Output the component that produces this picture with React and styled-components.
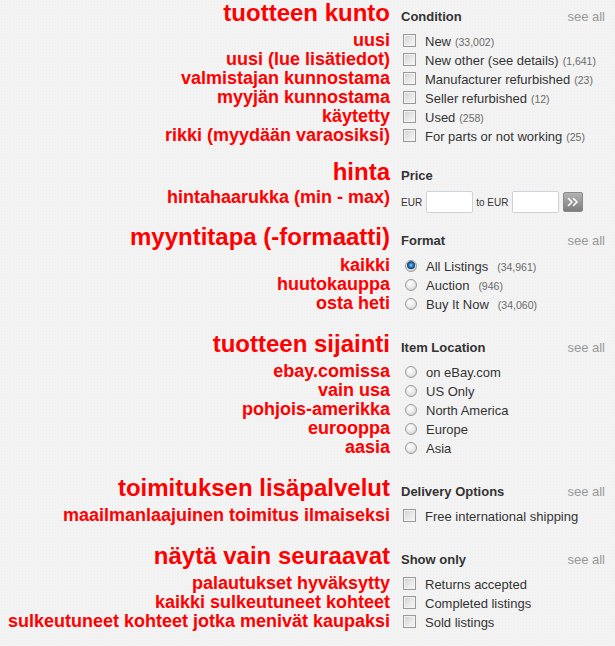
import React from "react";
import styled, { createGlobalStyle } from "styled-components";

const GlobalStyle = createGlobalStyle`
  html, body {
    margin: 0;
    padding: 0;
    background: #f3f3f3;
  }
  body {
    font-family: "Liberation Sans", Arial, Helvetica, sans-serif;
  }
  * { box-sizing: border-box; }
`;

const Page = styled.div`
  width: 615px;
  min-height: 646px;
  background-color: #f3f3f3;
  background-image: radial-gradient(rgba(0, 0, 0, 0.018) 1px, transparent 1px);
  background-size: 3px 3px;
`;

const Section = styled.section`
  margin-top: ${(p) => p.$mt}px;
`;

const Row = styled.div`
  display: grid;
  grid-template-columns: 390px 1fr;
  column-gap: 11px;
  padding-right: 10px;
  align-items: ${(p) => p.$align || "baseline"};
  height: ${(p) => p.$h}px;
`;

const RedHeading = styled.h2`
  margin: 0;
  font-size: 24px;
  font-weight: bold;
  line-height: 26px;
  color: #ff0000;
  text-align: right;
  white-space: nowrap;
`;

const RedLabel = styled.div`
  font-size: 18px;
  font-weight: bold;
  line-height: ${(p) => p.$lh || 19}px;
  color: #ff0000;
  text-align: right;
  white-space: nowrap;
`;

const Head = styled.div`
  display: flex;
  justify-content: space-between;
  align-items: baseline;
`;

const HeadTitle = styled.h3`
  margin: 0;
  font-size: 13px;
  font-weight: bold;
  line-height: 16px;
  color: #333;
`;

const SeeAll = styled.a`
  font-size: 13px;
  line-height: 16px;
  color: #999;
  text-decoration: none;
`;

const Option = styled.label`
  display: flex;
  align-items: baseline;
  font-size: 13px;
  line-height: 15px;
  color: #333;
  white-space: nowrap;
`;

const Check = styled.span`
  display: block;
  flex: none;
  align-self: flex-start;
  width: 13px;
  height: 13px;
  margin: 0 9px 0 2px;
  border: 1px solid #9a9a9a;
  background: linear-gradient(135deg, #cfcfcf 0%, #e6e6e6 50%, #fafafa 100%);
  box-shadow: inset 0 0 0 1px #f2f2f2;
`;

const Radio = styled.span`
  display: block;
  flex: none;
  align-self: flex-start;
  width: 12px;
  height: 12px;
  margin: 1px 9px 0 4px;
  border-radius: 50%;
  border: 1px solid #9b9b9b;
  background: ${(p) =>
    p.$checked
      ? "radial-gradient(circle at 50% 42%, #8fd0f5 0, #2a7fc2 2px, #0d4a84 3.4px, #5a6d80 4px, transparent 4.4px), radial-gradient(circle at 40% 35%, #ffffff 0%, #e4e4e4 55%, #c2c2c2 100%)"
      : "radial-gradient(circle at 40% 35%, #ffffff 0%, #e6e6e6 55%, #c4c4c4 100%)"};
`;

const Count = styled.span`
  font-size: 10.5px;
  color: #6a6a6a;
  margin-left: ${(p) => p.$gap}px;
`;

const PriceForm = styled.div`
  display: flex;
  align-items: center;
  gap: 3.5px;
  padding-top: 2px;
  font-size: 10px;
  color: #333;
  white-space: nowrap;
`;

const PriceInput = styled.input`
  width: 47px;
  height: 22px;
  margin: 0;
  padding: 0 3px;
  border: 1px solid #cdd3d8;
  border-radius: 2px;
  background: #fff;
`;

const GoButton = styled.button`
  width: 20px;
  height: 20px;
  margin-left: 0.5px;
  padding: 0;
  display: flex;
  align-items: center;
  justify-content: center;
  border: 1px solid #8a8a8a;
  border-radius: 2px;
  background: linear-gradient(#b4b4b4, #7c7c7c);
  cursor: pointer;
`;

const sections = [
  {
    fi: "tuotteen kunto",
    title: "Condition",
    seeAll: true,
    mt: 0,
    headH: 31,
    kind: "check",
    gap: 4,
    items: [
      { fi: "uusi", label: "New", count: "(33,002)" },
      { fi: "uusi (lue lisätiedot)", label: "New other (see details)", count: "(1,641)" },
      { fi: "valmistajan kunnostama", label: "Manufacturer refurbished", count: "(23)" },
      { fi: "myyjän kunnostama", label: "Seller refurbished", count: "(12)" },
      { fi: "käytetty", label: "Used", count: "(258)" },
      { fi: "rikki (myydään varaosiksi)", label: "For parts or not working", count: "(25)" },
    ],
  },
  {
    fi: "hinta",
    title: "Price",
    seeAll: false,
    mt: 14,
    headH: 30,
    kind: "price",
    priceFi: "hintahaarukka (min - max)",
  },
  {
    fi: "myyntitapa (-formaatti)",
    title: "Format",
    seeAll: true,
    mt: 9,
    headH: 32,
    kind: "radio",
    gap: 9,
    items: [
      { fi: "kaikki", label: "All Listings", count: "(34,961)", checked: true },
      { fi: "huutokauppa", label: "Auction", count: "(946)" },
      { fi: "osta heti", label: "Buy It Now", count: "(34,060)" },
    ],
  },
  {
    fi: "tuotteen sijainti",
    title: "Item Location",
    seeAll: true,
    mt: 18,
    headH: 31,
    kind: "radio",
    items: [
      { fi: "ebay.comissa", label: "on eBay.com" },
      { fi: "vain usa", label: "US Only" },
      { fi: "pohjois-amerikka", label: "North America" },
      { fi: "eurooppa", label: "Europe" },
      { fi: "aasia", label: "Asia" },
    ],
  },
  {
    fi: "toimituksen lisäpalvelut",
    title: "Delivery Options",
    seeAll: true,
    mt: 18,
    headH: 31,
    kind: "check",
    items: [{ fi: "maailmanlaajuinen toimitus ilmaiseksi", label: "Free international shipping" }],
  },
  {
    fi: "näytä vain seuraavat",
    title: "Show only",
    seeAll: true,
    mt: 18,
    headH: 31,
    kind: "check",
    items: [
      { fi: "palautukset hyväksytty", label: "Returns accepted" },
      { fi: "kaikki sulkeutuneet kohteet", label: "Completed listings" },
      { fi: "sulkeutuneet kohteet jotka menivät kaupaksi", label: "Sold listings" },
    ],
  },
];

function Chevrons() {
  return (
    <svg width="12" height="10" viewBox="0 0 12 10" aria-hidden="true">
      <polyline points="1.5,1.5 5,5 1.5,8.5" fill="none" stroke="#fff" strokeWidth="1.6" strokeLinecap="round" strokeLinejoin="round" />
      <polyline points="6.5,1.5 10,5 6.5,8.5" fill="none" stroke="#fff" strokeWidth="1.6" strokeLinecap="round" strokeLinejoin="round" />
    </svg>
  );
}

function FilterSection({ s }) {
  return (
    <Section $mt={s.mt}>
      <Row $h={s.headH}>
        <RedHeading>{s.fi}</RedHeading>
        <Head>
          <HeadTitle>{s.title}</HeadTitle>
          {s.seeAll && <SeeAll href="#">see all</SeeAll>}
        </Head>
      </Row>
      {s.kind === "price" && (
        <Row $h={26} $align="start">
          <RedLabel $lh={17}>{s.priceFi}</RedLabel>
          <PriceForm>
            <span>EUR</span>
            <PriceInput type="text" aria-label="min price" />
            <span>to EUR</span>
            <PriceInput type="text" aria-label="max price" />
            <GoButton type="button" aria-label="Submit price range">
              <Chevrons />
            </GoButton>
          </PriceForm>
        </Row>
      )}
      {s.items &&
        s.items.map((it) => (
          <Row $h={19} key={it.label}>
            <RedLabel>{it.fi}</RedLabel>
            <Option>
              {s.kind === "radio" ? <Radio $checked={it.checked} /> : <Check />}
              <span>{it.label}</span>
              {it.count && <Count $gap={s.gap}>{it.count}</Count>}
            </Option>
          </Row>
        ))}
    </Section>
  );
}

export default function App() {
  return (
    <>
      <GlobalStyle />
      <Page>
        {sections.map((s) => (
          <FilterSection key={s.title} s={s} />
        ))}
      </Page>
    </>
  );
}
